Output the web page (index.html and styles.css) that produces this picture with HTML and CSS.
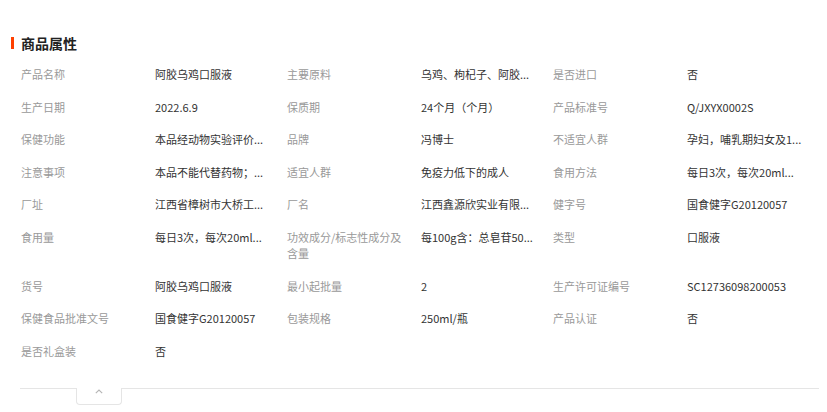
FILE: index.html
```html
<!DOCTYPE html>
<html lang="zh-CN">
<head>
<meta charset="utf-8">
<title>商品属性</title>
<link rel="stylesheet" href="styles.css">
</head>
<body>
<div class="page">
  <h2 class="title"><span class="bar"></span>商品属性</h2>
  <div class="attrs">
    <div class="k">产品名称</div><div class="v">阿胶乌鸡口服液</div>
    <div class="k">主要原料</div><div class="v">乌鸡、枸杞子、阿胶...</div>
    <div class="k">是否进口</div><div class="v">否</div>

    <div class="k">生产日期</div><div class="v">2022.6.9</div>
    <div class="k">保质期</div><div class="v">24个月（个月）</div>
    <div class="k">产品标准号</div><div class="v">Q/JXYX0002S</div>

    <div class="k">保健功能</div><div class="v">本品经动物实验评价...</div>
    <div class="k">品牌</div><div class="v">冯博士</div>
    <div class="k">不适宜人群</div><div class="v">孕妇，哺乳期妇女及1...</div>

    <div class="k">注意事项</div><div class="v">本品不能代替药物；...</div>
    <div class="k">适宜人群</div><div class="v">免疫力低下的成人</div>
    <div class="k">食用方法</div><div class="v">每日3次，每次20ml...</div>

    <div class="k">厂址</div><div class="v">江西省樟树市大桥工...</div>
    <div class="k">厂名</div><div class="v">江西鑫源欣实业有限...</div>
    <div class="k">健字号</div><div class="v">国食健字G20120057</div>

    <div class="k">食用量</div><div class="v">每日3次，每次20ml...</div>
    <div class="k">功效成分/标志性成分及含量</div><div class="v">每100g含：总皂苷50...</div>
    <div class="k">类型</div><div class="v">口服液</div>

    <div class="k">货号</div><div class="v">阿胶乌鸡口服液</div>
    <div class="k">最小起批量</div><div class="v">2</div>
    <div class="k">生产许可证编号</div><div class="v">SC12736098200053</div>

    <div class="k">保健食品批准文号</div><div class="v">国食健字G20120057</div>
    <div class="k">包装规格</div><div class="v">250ml/瓶</div>
    <div class="k">产品认证</div><div class="v">否</div>

    <div class="k">是否礼盒装</div><div class="v">否</div>
  </div>
  <div class="foot">
    <div class="tab">
      <svg width="8" height="5" viewBox="0 0 8 5"><path d="M0.8 4.2 L4 1 L7.2 4.2" fill="none" stroke="#b5b5b5" stroke-width="1.1"/></svg>
    </div>
  </div>
</div>
</body>
</html>
```

FILE: styles.css
```css
html, body {
  margin: 0;
  padding: 0;
  background: #fff;
}
body {
  font-family: "Noto Sans CJK SC", "Liberation Sans", sans-serif;
  font-size: 11px;
  color: #333;
}
.page {
  width: 799px;
  padding: 33px 0 0 20px;
}
.title {
  margin: 0 0 0 -9px;
  height: 20px;
  line-height: 20px;
  font-size: 14px;
  font-weight: bold;
  color: #222;
  display: flex;
  align-items: center;
  gap: 7px;
}
.bar {
  display: block;
  width: 3px;
  height: 12px;
  background: #ff4000;
}
.attrs {
  margin: 5px 0 0 1px;
  display: grid;
  grid-template-columns: repeat(3, 134px 132px);
  align-items: start;
}
.k, .v {
  padding: 8px 0;
  line-height: 16.5px;
}
.k {
  color: #999;
  padding-right: 14px;
}
.v {
  color: #333;
  padding-right: 10px;
  white-space: nowrap;
}
.foot {
  margin-top: 21px;
  border-top: 1px solid #e5e5e5;
  display: flex;
}
.tab {
  margin: -1px 0 0 56px;
  width: 44px;
  height: 15px;
  background: #fff;
  border: 1px solid #e5e5e5;
  border-top: none;
  border-radius: 0 0 4px 4px;
  display: flex;
  justify-content: center;
  align-items: flex-start;
  padding-top: 1px;
  box-sizing: content-box;
}
.tab svg {
  display: block;
}
```
